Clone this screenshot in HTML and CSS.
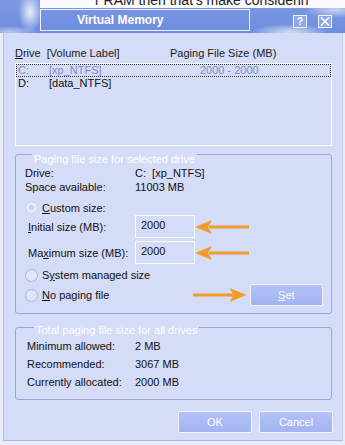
FILE: index.html
```html
<!DOCTYPE html>
<html>
<head>
  <meta charset="UTF-8">
  <title>Virtual Memory</title>
  <link rel="stylesheet" href="styles.css">
</head>
<body>
  <div class="sky">
    <div class="behind">
      <span class="behind-left"></span>
      <div class="doc"><span>r RAM then that's make considerin</span></div>
    </div>
    <div class="titlebar">
      <div class="title">Virtual Memory</div>
      <div class="caption-btns">
        <span class="cbtn">?</span>
        <span class="cbtn">
          <svg width="10" height="9" viewBox="0 0 10 9"><path d="M1 0.5 L9 8.5 M9 0.5 L1 8.5" stroke="#fff" stroke-width="1.6" fill="none"/></svg>
        </span>
      </div>
    </div>
  </div>

  <div class="window">
    <div class="list-head">
      <span><u>D</u>rive&nbsp; [Volume Label]</span>
      <span>Paging File Size (MB)</span>
    </div>
    <div class="drive-list">
      <div class="drive-row selected">
        <span>C:</span><span>[xp_NTFS]</span><span class="size">2000 - 2000</span>
      </div>
      <div class="drive-row">
        <span>D:</span><span>[data_NTFS]</span><span class="size"></span>
      </div>
    </div>

    <div class="group group-drive">
      <div class="legend">Paging file size for selected drive</div>
      <div class="info-row"><span class="key">Drive:</span><span>C:&nbsp; [xp_NTFS]</span></div>
      <div class="info-row"><span class="key">Space available:</span><span>11003 MB</span></div>
      <label class="radio-row custom"><span class="radio checked"></span><span><u>C</u>ustom size:</span></label>
      <div class="size-row">
        <span class="key"><u>I</u>nitial size (MB):</span>
        <span class="field">2000</span>
        <svg class="arrow" width="56" height="16" viewBox="0 0 56 16"><path d="M14 8 H54" stroke="#f29a2e" stroke-width="3"/><path d="M0 8 L17 1 L13 8 L17 15 Z" fill="#f29a2e"/></svg>
      </div>
      <div class="size-row">
        <span class="key">Ma<u>x</u>imum size (MB):</span>
        <span class="field">2000</span>
        <svg class="arrow" width="56" height="16" viewBox="0 0 56 16"><path d="M14 8 H54" stroke="#f29a2e" stroke-width="3"/><path d="M0 8 L17 1 L13 8 L17 15 Z" fill="#f29a2e"/></svg>
      </div>
      <label class="radio-row"><span class="radio"></span><span>S<u>y</u>stem managed size</span></label>
      <div class="set-row">
        <label class="radio-row"><span class="radio"></span><span><u>N</u>o paging file</span></label>
        <svg class="arrow" width="56" height="16" viewBox="0 0 56 16"><path d="M1 8 H42" stroke="#f29a2e" stroke-width="3"/><path d="M55 8 L38 1 L42 8 L38 15 Z" fill="#f29a2e"/></svg>
        <button class="xp-btn set-btn"><u>S</u>et</button>
      </div>
    </div>

    <div class="group group-total">
      <div class="legend">Total paging file size for all drives</div>
      <div class="total-row"><span class="key">Minimum allowed:</span><span>2 MB</span></div>
      <div class="total-row"><span class="key">Recommended:</span><span>3067 MB</span></div>
      <div class="total-row"><span class="key">Currently allocated:</span><span>2000 MB</span></div>
    </div>

    <div class="actions">
      <button class="xp-btn">OK</button>
      <button class="xp-btn">Cancel</button>
    </div>
  </div>
</body>
</html>
```

FILE: styles.css
```css
* {
  box-sizing: border-box;
}
body {
  margin: 0;
  width: 345px;
  height: 445px;
  overflow: hidden;
  background: #e9edfb;
  font-family: "Liberation Sans", Arial, sans-serif;
  font-size: 11px;
  color: #111;
}
u {
  text-decoration: underline;
}

/* title area, with the XP sky behind it */
.sky {
  background:
    radial-gradient(ellipse 12px 20px at 30px 12px, rgba(255,255,255,0.85), rgba(255,255,255,0) 100%),
    radial-gradient(ellipse 40px 8px at 290px 32px, rgba(255,255,255,0.7), rgba(255,255,255,0) 100%),
    radial-gradient(ellipse 30px 8px at 335px 10px, rgba(255,255,255,0.6), rgba(255,255,255,0) 100%),
    radial-gradient(ellipse 30px 6px at 10px 32px, rgba(255,255,255,0.5), rgba(255,255,255,0) 100%),
    linear-gradient(#7d98e2, #6c8ddf);
}
.behind {
  display: flex;
  height: 8px;
}
.behind-left {
  width: 40px;
}
.doc {
  flex: 1;
  background: #fbfbfd;
  overflow: hidden;
  padding-left: 55px;
}
.doc span {
  display: block;
  margin-top: -7px;
  font-size: 14px;
  line-height: 14px;
  white-space: nowrap;
  color: #222;
}
.titlebar {
  height: 25px;
  display: flex;
  align-items: flex-start;
  padding: 1px 13px 0 40px;
}
.title {
  width: 210px;
  height: 22px;
  border: 1px solid #eef2ff;
  padding-left: 36px;
  color: #fff;
  font-weight: bold;
  font-size: 12px;
  line-height: 20px;
}
.caption-btns {
  margin-left: auto;
  margin-top: 6px;
  display: flex;
  gap: 11px;
}
.cbtn {
  width: 14px;
  height: 13px;
  border: 1px solid #f0f4ff;
  background: #8ea8ea;
  color: #fff;
  font-weight: bold;
  font-size: 10px;
  line-height: 11px;
  display: flex;
  justify-content: center;
  align-items: center;
}

/* dialog body */
.window {
  margin: 0 2px 0 3px;
  height: 408px;
  background: #d5dcf7;
  border-left: 1px solid #b4bee6;
  border-right: 1px solid #c3cbee;
  border-bottom: 1px solid #a9b3dc;
  padding: 14px 10px 0 11px;
}
.list-head {
  display: grid;
  grid-template-columns: 155px auto;
  line-height: 13px;
  color: #1a1a1a;
}
.drive-list {
  margin-top: 3px;
  height: 83px;
  border: 1px solid #fafbff;
}
.drive-row {
  display: grid;
  grid-template-columns: 31px 151px auto;
  height: 13px;
  line-height: 11px;
  padding-left: 1px;
  border: 1px solid transparent;
}
.drive-row.selected {
  border: 1px dotted #333;
  color: #7d8bc8;
}

.group {
  border: 1px solid #9aa6d0;
  border-radius: 3px;
}
.legend {
  width: fit-content;
  margin: -7px 0 0 7px;
  padding: 0 2px;
  background: #d5dcf7;
  color: #fff;
  line-height: 13px;
}
.group-drive {
  margin-top: 8px;
  padding: 5px 8px 7px 9px;
}
.info-row {
  display: grid;
  grid-template-columns: 110px auto;
  line-height: 14px;
}
.radio-row {
  display: flex;
  align-items: center;
  gap: 4px;
  height: 16px;
}
.radio-row.custom {
  margin-top: 6px;
  height: 15px;
}
.radio {
  width: 13px;
  height: 13px;
  border-radius: 50%;
  border: 1px solid #aab5dc;
  background: #dfe5fa;
  display: flex;
  justify-content: center;
  align-items: center;
}
.radio.checked {
  border-color: #c6cfee;
  background: #e4e9fb;
}
.radio.checked::after {
  content: "";
  width: 5px;
  height: 5px;
  border-radius: 50%;
  background: #c3cbf0;
}
.size-row {
  display: grid;
  grid-template-columns: 110px 60px 56px;
  align-items: center;
  height: 23px;
  margin-bottom: 3px;
}
.size-row .key {
  padding-left: 3px;
}
.field {
  height: 23px;
  border: 1px solid #fafbff;
  padding-left: 5px;
  line-height: 19px;
}
.arrow {
  display: block;
}
.size-row + .radio-row {
  margin-top: 1px;
}
.set-row {
  display: flex;
  align-items: center;
  margin-top: 1px;
}
.set-row .radio-row {
  width: 169px;
}
.xp-btn {
  width: 74px;
  height: 22px;
  border: 1px solid #f2f5ff;
  border-radius: 2px;
  background: linear-gradient(#b2c1f6, #a2b4f2);
  color: #fff;
  font-family: "Liberation Sans", Arial, sans-serif;
  font-size: 11px;
  padding: 0;
}
.set-btn {
  margin-left: 2px;
}

.group-total {
  margin-top: 13px;
  padding: 3px 8px 8px 11px;
}
.total-row {
  display: grid;
  grid-template-columns: 108px auto;
  line-height: 18px;
}

.actions {
  display: flex;
  justify-content: flex-end;
  gap: 7px;
  margin-top: 11px;
  margin-right: -1px;
}
```
